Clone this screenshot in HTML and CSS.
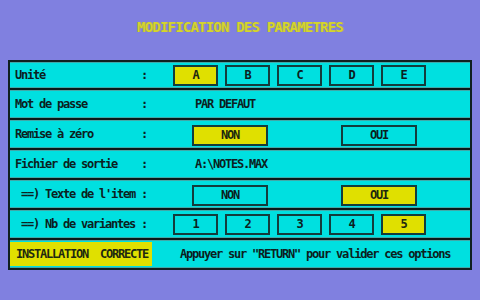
FILE: index.html
```html
<!DOCTYPE html>
<html>
<head>
<title>Modification des parametres</title>
<meta name="viewport" content="width=device-width, initial-scale=1.0">
<link rel="stylesheet" href="styles.css">
</head>
<body>

<h1 class="title">MODIFICATION DES PARAMETRES</h1>

<section class="panel">

<div class="row first">
  <span class="label">Unité</span><span class="colon">:</span>
  <div class="choices small">
    <span class="btn on">A</span>
    <span class="btn">B</span>
    <span class="btn">C</span>
    <span class="btn">D</span>
    <span class="btn">E</span>
  </div>
</div>

<div class="row">
  <span class="label">Mot de passe</span><span class="colon">:</span>
  <span class="value">PAR DEFAUT</span>
</div>

<div class="row">
  <span class="label">Remise à zéro</span><span class="colon">:</span>
  <div class="choices wide">
    <span class="btn on">NON</span>
    <span class="btn">OUI</span>
  </div>
</div>

<div class="row">
  <span class="label">Fichier de sortie</span><span class="colon">:</span>
  <span class="value">A:\NOTES.MAX</span>
</div>

<div class="row">
  <span class="label sub">==) Texte de l'item</span><span class="colon">:</span>
  <div class="choices wide">
    <span class="btn">NON</span>
    <span class="btn on">OUI</span>
  </div>
</div>

<div class="row">
  <span class="label sub">==) Nb de variantes</span><span class="colon">:</span>
  <div class="choices small">
    <span class="btn">1</span>
    <span class="btn">2</span>
    <span class="btn">3</span>
    <span class="btn">4</span>
    <span class="btn on">5</span>
  </div>
</div>

<div class="row status">
  <span class="state">INSTALLATION&nbsp;&nbsp;CORRECTE</span>
  <span class="hint">Appuyer sur "RETURN" pour valider ces options</span>
</div>

</section>

</body>
</html>
```

FILE: styles.css
```css
body {
   background-color: #8080e0;
   color: #0c2020;
   font-family: 'DejaVu Sans Mono', monospace;
   font-size: 12px;
   font-weight: bold;
   letter-spacing: -1.22px;
   margin: 0;}

.title {
   color: #d4d430;
   font-size: 14px;
   letter-spacing: -0.8px;
   line-height: 14px;
   margin: 0;
   padding: 20px 0 26px 0;
   text-align: center;
   text-shadow: 1px 0 0 #9c9c48;}

.panel {
   background-color: #00e0e0;
   border: 2px solid #102020;
   margin: 0 8px;}

.row {
   align-items: center;
   border-bottom: 2px solid #081818;
   box-shadow: inset 0 1px 0 #40a8a8, inset 0 -1px 0 #40a8a8;
   display: flex;
   height: 28px;
   padding-left: 5px;}

.row.first {
   height: 26px;}

.row:last-child {
   border-bottom: none;}

.label {
   width: 126px;}

.label.sub {
   padding-left: 6px;
   width: 120px;}

.colon {
   width: 6px;}

.value {
   margin-left: 48px;}

.choices {
   display: flex;}

.choices.small {
   gap: 7px;
   margin-left: 26px;}

.choices.wide {
   gap: 73px;
   margin-left: 45px;
   padding-top: 2px;}

.btn {
   border: 2px solid #143c3c;
   box-sizing: border-box;
   height: 21px;
   line-height: 17px;
   text-align: center;}

.small .btn {
   width: 45px;}

.wide .btn {
   width: 76px;}

.btn.on {
   background-color: #e0e000;
   color: #202810;}

.status {
   padding-left: 0;}

.state {
   background-color: #e0e000;
   color: #202810;
   height: 24px;
   line-height: 24px;
   padding: 0 6px;
   width: 130px;}

.hint {
   margin-left: 28px;}
```
